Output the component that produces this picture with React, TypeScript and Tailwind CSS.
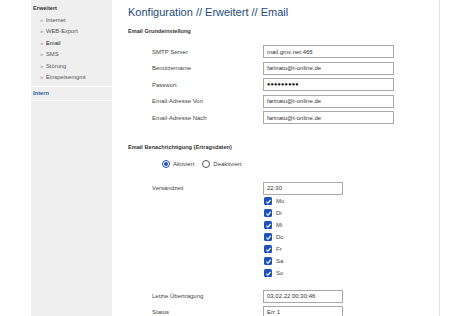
import React from "react";

const F = { fontFamily: '"Liberation Sans", Arial, sans-serif' };

function Input({ value, w, pw }: { value: string; w: string; pw?: boolean }) {
  return (
    <div
      className={`${w} h-full border border-[#a8a8a8] bg-white flex items-center pl-[3px] text-[6px] text-[#333] leading-none`}
    >
      {pw ? <span className="text-[5.5px] tracking-[0.2px] text-[#111]">●●●●●●●●●</span> : value}
    </div>
  );
}

function Row({ label, value, w, pw, h }: { label: string; value: string; w: string; pw?: boolean; h: string }) {
  return (
    <div className={`flex items-stretch ${h}`}>
      <div className="w-[135px] pl-[24px] flex items-center text-[6px] text-[#444] leading-none">{label}</div>
      <Input value={value} w={w} pw={pw} />
    </div>
  );
}

function Check({ label }: { label: string }) {
  return (
    <div className="h-[12px] flex items-center pl-[136px]">
      <div className="w-[8px] h-[8px] rounded-[1.5px] bg-[#1f52b8] flex items-center justify-center">
        <svg width="7" height="7" viewBox="0 0 10 10">
          <path d="M2 5.2 L4.2 7.4 L8.2 2.8" stroke="white" strokeWidth="1.8" fill="none" />
        </svg>
      </div>
      <span className="ml-[4px] text-[6px] text-[#444] leading-none">{label}</span>
    </div>
  );
}

export default function App() {
  const items = ["Internet", "WEB-Export", "Email", "SMS", "Störung", "Einspeisemgmt"];
  return (
    <div className="w-[450px] h-[316px] bg-white overflow-hidden flex" style={F}>
      <div className="w-[31px] shrink-0" />
      <div className="w-[81px] shrink-0 bg-[#efefef] h-full flex flex-col">
        <div className="pt-[4px] pl-[2px] h-[13px] text-[5.6px] font-bold text-[#333] leading-[9px]">Erweitert</div>
        <div className="mt-[2px] flex flex-col">
          {items.map((it) => (
            <div key={it} className="h-[11.5px] flex items-center pl-[9px] text-[5.8px] leading-none">
              <span className="text-[#999] w-[6px]">»</span>
              <span className={it === "Email" ? "text-[#222]" : "text-[#555]"}>{it}</span>
            </div>
          ))}
        </div>
        <div className="mt-[2px] border-t border-white h-[14px] flex items-center pl-[2px] text-[5.8px] font-bold text-[#2a5d9c] leading-none">
          Intern
        </div>
        <div className="border-t border-white" />
      </div>
      <div className="w-[327px] shrink-0 pl-[16px] flex flex-col">
        <div className="pt-[6px] h-[19px] text-[11px] leading-[13px] text-[#1d4a7c]">Konfiguration // Erweitert // Email</div>
        <div className="mt-[8px] h-[8px] leading-[8px] text-[5.6px] font-bold text-[#333]">Email Grundeinstellung</div>
        <div className="mt-[10px] flex flex-col gap-[3.5px]">
          <Row h="h-[13px]" label="SMTP Server" value="mail.gmx.net:465" w="w-[131px]" />
          <Row h="h-[13px]" label="Benutzername" value="farinato@t-online.de" w="w-[131px]" />
          <Row h="h-[13px]" label="Passwort" value="" pw w="w-[131px]" />
          <Row h="h-[13px]" label="Email-Adresse Von" value="farinato@t-online.de" w="w-[131px]" />
          <Row h="h-[13px]" label="Email-Adresse Nach" value="farinato@t-online.de" w="w-[131px]" />
        </div>
        <div className="mt-[19px] h-[8px] leading-[8px] text-[5.6px] font-bold text-[#333]">
          Email Benachrichtigung (Ertragsdaten)
        </div>
        <div className="mt-[9px] h-[10px] flex items-center pl-[34px] text-[6px] text-[#444] leading-none">
          <div className="w-[8px] h-[8px] rounded-full border border-[#1f52b8] flex items-center justify-center">
            <div className="w-[4px] h-[4px] rounded-full bg-[#1f52b8]" />
          </div>
          <span className="ml-[3px]">Aktiviert</span>
          <div className="ml-[8px] w-[8px] h-[8px] rounded-full border border-[#555]" />
          <span className="ml-[3px]">Deaktiviert</span>
        </div>
        <div className="mt-[14px]">
          <Row h="h-[12.5px]" label="Versandzeit" value="22:30" w="w-[80px]" />
        </div>
        <div className="mt-[0.5px] flex flex-col">
          {["Mo", "Di", "Mi", "Do", "Fr", "Sa", "So"].map((d) => (
            <Check key={d} label={d} />
          ))}
        </div>
        <div className="mt-[11px] flex flex-col gap-[3.5px]">
          <Row h="h-[12.5px]" label="Letzte Übertragung" value="03.02.22  00:30:46" w="w-[80px]" />
          <Row h="h-[12.5px]" label="Status" value="Err 1" w="w-[80px]" />
        </div>
      </div>
      <div className="w-px h-full bg-[#e2e2e2] shrink-0" />
    </div>
  );
}
